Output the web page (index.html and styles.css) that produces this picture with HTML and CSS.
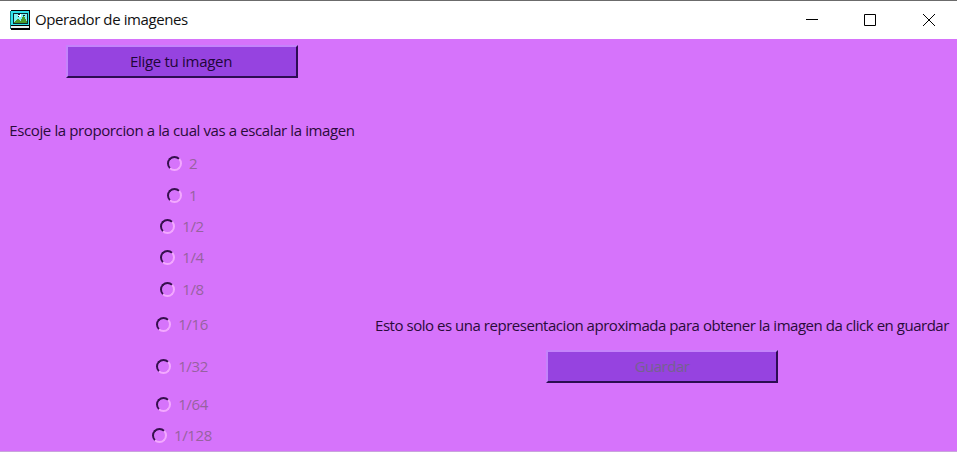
FILE: index.html
```
<!DOCTYPE html>
<html lang="es">
<head>
<meta charset="utf-8">
<title>Operador de imagenes</title>
<link rel="stylesheet" href="styles.css">
</head>
<body>
<div class="window">
  <header class="titlebar">
    <svg class="app-icon" width="20" height="20" viewBox="0 0 20 20" shape-rendering="crispEdges">
      <path fill="#000" d="M1 0h19v20H1z"/>
      <path fill="#157a80" d="M0 1h1v18H0z"/>
      <path fill="#2fe3ea" d="M1 1h18v14H1z"/>
      <path fill="#0c2a30" d="M3 3h15v11H3z"/>
      <path fill="#7ff3f3" d="M4 4h13v9H4z"/>
      <path fill="#fff" d="M8 4h3v3H8z"/>
      <path fill="#123" d="M8 4h2v1H8zM8 6h1v1H8zM13 5h2v1h-2z"/>
      <path fill="#4c9a2a" d="M4 13v-1h1v-1h1v-1h1V9h2v1h1v1h1V9h1V7h1V6h1v1h1v2h1v2h1v2z"/>
      <path fill="#e6eeee" d="M1 16h18v2H1z"/>
    </svg>
    <h1 class="title">Operador de imagenes</h1>
    <div class="controls">
      <svg width="58" height="38" viewBox="0 0 58 38"><path d="M20 18.5h12"/></svg>
      <svg width="58" height="38" viewBox="0 0 58 38"><path d="M20.5 13.5h11v11h-11z"/></svg>
      <svg width="58" height="38" viewBox="0 0 58 38"><path d="M21 13l12 12M33 13L21 25"/></svg>
    </div>
  </header>
  <main class="client">
    <section class="scale">
      <button class="button choose">Elige tu imagen</button>
      <p class="label prompt">Escoje la proporcion a la cual vas a escalar la imagen</p>
      <div class="options">
        <label class="option"><span class="radio"></span>2</label>
        <label class="option"><span class="radio"></span>1</label>
        <label class="option"><span class="radio"></span>1/2</label>
        <label class="option"><span class="radio"></span>1/4</label>
        <label class="option"><span class="radio"></span>1/8</label>
        <label class="option"><span class="radio"></span>1/16</label>
        <label class="option"><span class="radio"></span>1/32</label>
        <label class="option"><span class="radio"></span>1/64</label>
        <label class="option"><span class="radio"></span>1/128</label>
      </div>
    </section>
    <section class="preview">
      <p class="label note">Esto solo es una representacion aproximada para obtener la imagen da click en guardar</p>
      <button class="button save" disabled>Guardar</button>
    </section>
  </main>
</div>
</body>
</html>
```

FILE: styles.css
```
* { box-sizing: border-box; }
body { margin: 0; font-family: "Open Sans", "Noto Sans", sans-serif; font-size: 15px; line-height: 20px; }
.window { width: 957px; height: 452px; display: flex; flex-direction: column; border-top: 1px solid #6b6b6b; border-bottom: 1px solid #c9a5dc; }
.titlebar { height: 38px; flex: none; background: #fff; display: flex; align-items: center; padding-left: 10px; }
.app-icon { margin-right: 5px; }
.title { margin: 0 0 2px; font-size: 15px; font-weight: 400; letter-spacing: -0.4px; color: #111; white-space: nowrap; }
.controls { margin-left: auto; margin-right: -3px; display: flex; }
.controls path { fill: none; stroke: #000; stroke-width: 1; }
.client { flex: 1; display: grid; grid-template-columns: 365px 592px; background: #d673fb; overflow: hidden; }
.scale { display: flex; flex-direction: column; align-items: center; padding-right: 1px; }
.choose { margin-top: 6px; }
.label { margin: 0; white-space: nowrap; color: #2a0b3a; letter-spacing: -0.39px; }
.prompt { margin-top: 42px; }
.options { display: grid; grid-template-rows: 32px 31px 31px 32px 31px 40px 43px 33px 30px; align-items: center; justify-items: center; margin-top: 7px; }
.option { display: flex; align-items: center; gap: 7px; color: #96629f; letter-spacing: -0.4px; }
.radio { width: 15px; height: 15px; margin-top: 1px; border-radius: 50%; border: 2px solid; border-color: #35104c #f3a9ff #f3a9ff #35104c; }
.button { width: 232px; height: 33px; padding: 0 2px 2px 0; border: 2px solid; border-color: #c583fb #2c0d52 #2c0d52 #c583fb; background: #9643e0; color: #1e0639; font: inherit; letter-spacing: -0.3px; }
.preview { display: flex; flex-direction: column; align-items: center; padding-left: 2px; }
.note { margin-top: 276px; letter-spacing: -0.47px; }
.save { margin-top: 15px; padding-right: 0; color: #75618f; letter-spacing: -0.5px; }
```
